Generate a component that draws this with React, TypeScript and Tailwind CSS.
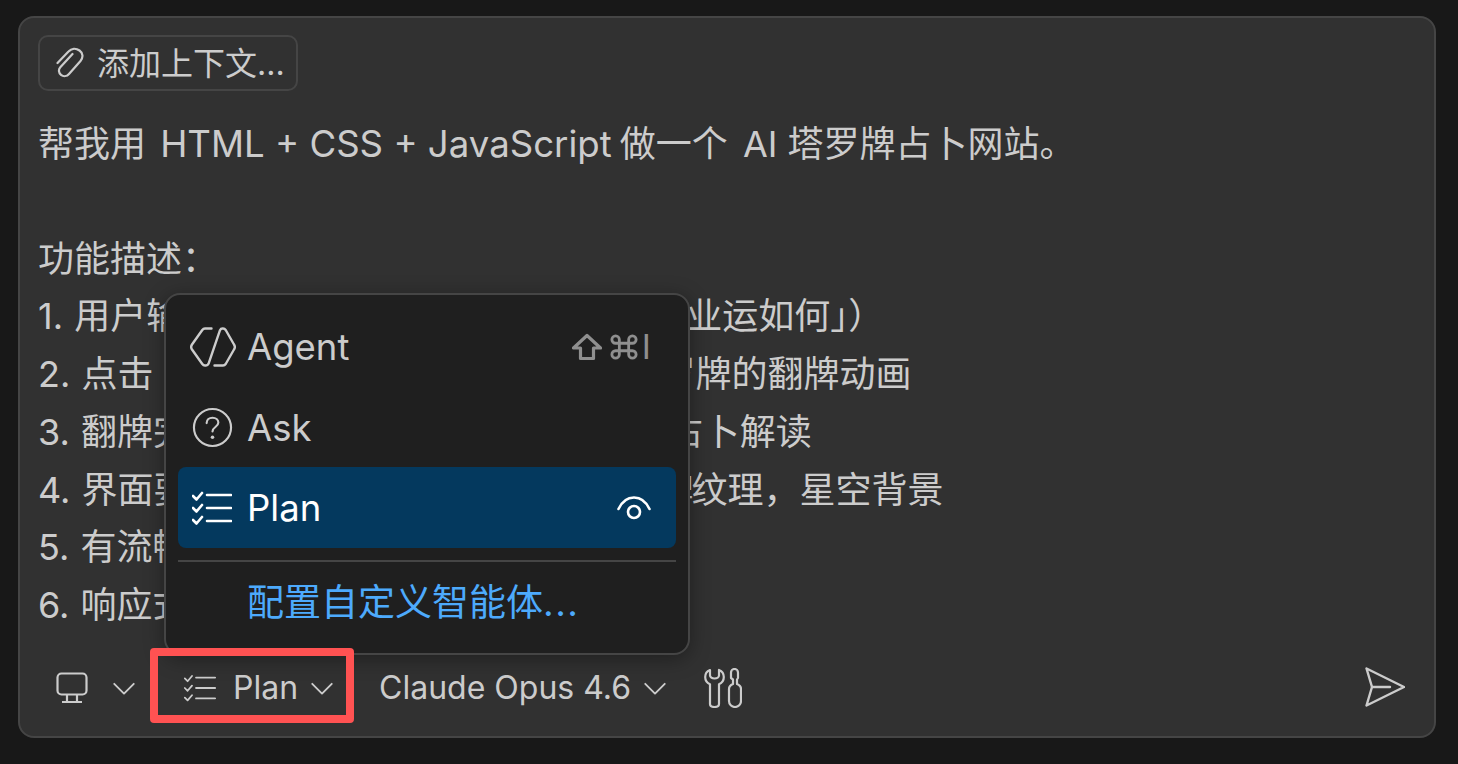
import React, { ReactNode } from 'react';

const sans = "font-['Inter','Noto_Sans_CJK_SC',sans-serif]";

const ChecklistIcon = ({ className, strokeWidth = 2.2 }: { className?: string; strokeWidth?: number }) => (
  <svg viewBox="0 0 40 34" fill="none" stroke="currentColor" strokeWidth={strokeWidth} className={className}>
    <path d="M1 5l3.500 3.500L10 2M1 17l3.500 3.500L10 14M1 29l3.500 3.500L10 26" strokeLinecap="round" strokeLinejoin="round" />
    <path d="M15 4h24M15 17h24M15 30h24" strokeLinecap="round" />
  </svg>
);

const Chevron = ({ className }: { className?: string }) => (
  <svg viewBox="0 0 24 14" fill="none" stroke="currentColor" strokeWidth="2" className={className}>
    <path d="M1.500 2L12 12.500 22.500 2" strokeLinecap="round" strokeLinejoin="round" />
  </svg>
);

const lines: ReactNode[] = [
  <span className="relative top-[1px] [word-spacing:0]">
    帮我用 <span className="ml-1 -mr-[2px] text-[36.6px]">HTML + CSS + JavaScript</span> 做一个 <span className="ml-[5px]">AI</span> 塔罗牌占卜网站。
  </span>,
  '',
  '功能描述：',
  '1. 用户输入想问的问题（如「我今年的事业运如何」）',
  <>
    2. 点击<span className="mr-[2px]">「开始占卜」</span>按钮，展示三张塔罗牌的翻牌动画
  </>,
  <>
    3. 翻牌完成后，由 <span className="mx-[13px]">AI</span> 生成详细的塔罗占卜解读
  </>,
  <>
    4. 界面要有神秘风格，深紫色与<span className="-mr-[2px]">金色卡牌</span>纹理，星空背景
  </>,
  '5. 有流畅的动画效果',
  '6. 响应式设计',
];

export default function App() {
  return (
    <div className={`relative h-[764px] w-[1458px] overflow-hidden bg-[#181818] pt-4 pl-[18px] ${sans}`}>
      <div className="flex h-[722px] w-[1418px] flex-col rounded-2xl border-2 border-[#454545] bg-[#313131] text-[#cccccc]">
        <div className="pt-[17px] pl-[18px]">
          <div className="flex h-14 w-[260px] items-center gap-[11px] rounded-[10px] border-2 border-[#454545] pl-4 text-[32px]">
            <svg viewBox="0 0 30 32" fill="none" stroke="currentColor" strokeWidth="2.2" className="h-8 w-[30px] shrink-0">
              <path d="M1.500 16L12.500 4.500C15.500 1.200 20 1 23.500 3.500C27 6 27.500 10.500 24.500 14L13 27C11 29.300 7.500 29.800 5 27.800C2.500 25.800 2.300 22.500 4.300 20.200L16.500 7" strokeLinecap="round" strokeLinejoin="round" />
            </svg>
            <span className="whitespace-nowrap pt-[2px]">添加上下文...</span>
          </div>
        </div>
        <div className="mt-6 flex-1 pl-[18px] text-[36px] leading-[57.75px] whitespace-pre [word-spacing:1px]">
          {lines.map((line, i) => (
            <div key={i} className="h-[57.75px]">{line}</div>
          ))}
        </div>
        <div className="flex h-[98px] items-center pl-9 pr-[29px] pt-[2px] text-[32px]">
          <svg viewBox="0 0 32 32" fill="none" stroke="currentColor" strokeWidth="2.2" className="h-8 w-8">
            <rect x="1.500" y="1.500" width="29" height="21" rx="4" />
            <path d="M11 23v6M21 23v6M6 30h20" />
          </svg>
          <Chevron className="ml-6 h-[13px] w-6" />
          <ChecklistIcon className="ml-12 h-7 w-8" />
          <span className="ml-[17px]">Plan</span>
          <Chevron className="ml-3 h-[13px] w-6" />
          <span className="ml-[45px]">Claude Opus 4.6</span>
          <Chevron className="ml-3 h-[13px] w-6" />
          <svg viewBox="0 0 38 40" fill="none" stroke="currentColor" strokeWidth="2.2" className="ml-[37px] h-10 w-[38px]">
            <path d="M6 2C3 3.200 1.200 6 1.200 9c0 3.300 2 6 4.800 7.300V36c0 1.700 1.800 3 4.500 3s4.500-1.300 4.500-3V16.300c2.800-1.300 4.800-4 4.800-7.300 0-3-1.800-5.800-4.800-7v5.500c0 1.500-2 3-4.500 3s-4.500-1.500-4.500-3z" strokeLinejoin="round" />
            <path d="M27 4.500a3.500 3.500 0 0 1 7 0V10l-1 1.500V16c2.500 1 4 2.500 4 5v12c0 3.500-2.700 6-6 6s-6-2.500-6-6V21c0-2.500 1.500-4 4-5v-4.500L27 10z" strokeLinejoin="round" />
          </svg>
          <svg viewBox="0 0 40 40" fill="none" stroke="currentColor" strokeWidth="2.4" className="ml-auto -mt-[2px] h-10 w-10">
            <path d="M1.500 1.500L39 20 1.500 38.500 7 20z" strokeLinejoin="round" />
            <path d="M7 20h18" strokeLinecap="round" />
          </svg>
        </div>
      </div>

      {/* mode picker popover */}
      <div className="absolute top-[293px] left-[164px] flex h-[362px] w-[526px] flex-col rounded-2xl border-2 border-[#454545] bg-[#1f1f1f] px-3 pt-3 text-[36.5px] text-[#cccccc] shadow-[0_4px_20px_rgba(0,0,0,0.36)]">
        <div className="flex h-20 items-center pl-3 pr-[25px]">
          <svg viewBox="0 0 46 40" fill="none" stroke="currentColor" strokeWidth="2.4" className="h-10 w-[46px]">
            <path d="M21.500 1.500H15c-1.200 0-2 .5-2.700 1.500L2 17.500c-1 1.500-1 3.500 0 5L12.300 37c.7 1 1.500 1.500 2.700 1.500h1c1.200 0 2-.6 2.500-1.700L30 3.200c.5-1.100 1.300-1.700 2.500-1.700h.5c1.200 0 2 .5 2.700 1.500L44 17.500c1 1.500 1 3.500 0 5L35.700 37c-.7 1-1.500 1.500-2.700 1.500h-8.500" strokeLinecap="round" strokeLinejoin="round" />
          </svg>
          <span className="ml-[11px]">Agent</span>
          <span className="ml-auto flex items-center text-[#8f8f8f]">
            <svg viewBox="1 0 30 28" fill="none" stroke="currentColor" strokeWidth="3.200" className="h-7 w-[30px]">
              <path d="M16 2.500L2.500 15h7v10.500h13V15h7z" strokeLinejoin="round" />
            </svg>
            <svg viewBox="0 0 30 28" fill="none" stroke="currentColor" strokeWidth="3" className="ml-2 h-7 w-7">
              <path d="M10 10h10v8H10zM10 10V6a4 4 0 1 0-4 4h18a4 4 0 1 0-4-4v16a4 4 0 1 0 4-4H6a4 4 0 1 0 4 4z" />
            </svg>
            <span className="ml-1 text-[34px] leading-none">I</span>
          </span>
        </div>
        <div className="flex h-20 items-center pl-3 pt-[2px]">
          <svg viewBox="0 0 42 42" fill="none" stroke="currentColor" strokeWidth="2.2" className="ml-[2px] -mt-[2px] h-[41px] w-[41px]">
            <circle cx="21" cy="21" r="19" />
            <path d="M15 16.500c0-3.500 2.700-5.500 6-5.500s6 2 6 5c0 4.500-6 4.500-6 9" strokeLinecap="round" />
            <circle cx="21" cy="31" r="1.800" fill="currentColor" stroke="none" />
          </svg>
          <span className="ml-[14px]">Ask</span>
        </div>
        <div className="flex h-[81px] items-center rounded-lg bg-[#04395e] pl-[14px] pr-[25px] text-white">
          <ChecklistIcon className="h-[34px] w-10" strokeWidth={2.6} />
          <span className="ml-[15px] pt-[2px]">Plan</span>
          <svg viewBox="0 0 34 24" fill="none" stroke="currentColor" strokeWidth="2.6" className="ml-auto h-6 w-[34px]">
            <path d="M1.500 13C5 5.500 10.500 1.500 17 1.500S29 5.500 32.500 13" strokeLinecap="round" />
            <circle cx="17" cy="16" r="6" />
          </svg>
        </div>
        <div className="mt-3 h-[2px] bg-[#454545]" />
        <div className="mt-[13px] pl-[69px] text-[37px] text-[#4daafc]">
          配置自定义智能体<span className="tracking-[1.5px]">...</span>
        </div>
      </div>

      {/* red highlight around the mode button */}
      <div className="absolute top-[648px] left-[150px] h-[75px] w-[204px] rounded-[4px] border-8 border-[#ff5252]" />
    </div>
  );
}
